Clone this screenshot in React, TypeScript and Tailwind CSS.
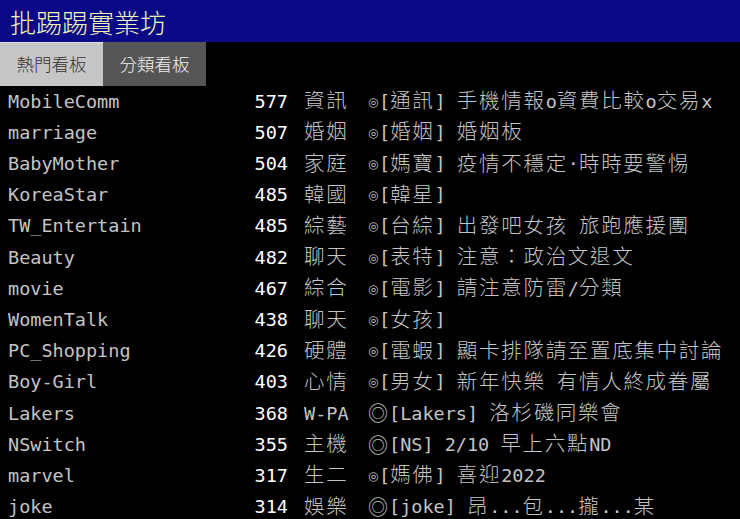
import React from 'react'

type Board = {
  name: string
  count: number
  cat: string
  desc: string
  big?: boolean
}

const boards: Board[] = [
  { name: 'MobileComm', count: 577, cat: '資訊', desc: '[通訊] 手機情報o資費比較o交易x' },
  { name: 'marriage', count: 507, cat: '婚姻', desc: '[婚姻] 婚姻板' },
  { name: 'BabyMother', count: 504, cat: '家庭', desc: '[媽寶] 疫情不穩定·時時要警惕' },
  { name: 'KoreaStar', count: 485, cat: '韓國', desc: '[韓星]' },
  { name: 'TW_Entertain', count: 485, cat: '綜藝', desc: '[台綜] 出發吧女孩 旅跑應援團' },
  { name: 'Beauty', count: 482, cat: '聊天', desc: '[表特] 注意：政治文退文' },
  { name: 'movie', count: 467, cat: '綜合', desc: '[電影] 請注意防雷/分類' },
  { name: 'WomenTalk', count: 438, cat: '聊天', desc: '[女孩]' },
  { name: 'PC_Shopping', count: 426, cat: '硬體', desc: '[電蝦] 顯卡排隊請至置底集中討論' },
  { name: 'Boy-Girl', count: 403, cat: '心情', desc: '[男女] 新年快樂 有情人終成眷屬' },
  { name: 'Lakers', count: 368, cat: 'W-PA', desc: '[Lakers] 洛杉磯同樂會', big: true },
  { name: 'NSwitch', count: 355, cat: '主機', desc: '[NS] 2/10 早上六點ND', big: true },
  { name: 'marvel', count: 317, cat: '生二', desc: '[媽佛] 喜迎2022' },
  { name: 'joke', count: 314, cat: '娛樂', desc: '[joke] 昂...包...攏...某', big: true },
]

const wide = /[\u2E80-\u9FFF\uF900-\uFAFF\uFF00-\uFF60]/

// split text into half-width and full-width runs so CJK takes two cells
function Term({ text }: { text: string }) {
  const runs: { w: boolean; s: string }[] = []
  for (const ch of text) {
    const w = wide.test(ch)
    const last = runs[runs.length - 1]
    if (last && last.w === w) last.s += ch
    else runs.push({ w, s: ch })
  }
  return (
    <>
      {runs.map((r, i) =>
        r.w ? (
          <span key={i} className="text-[20.5px] font-light tracking-[1.7px]">
            {r.s}
          </span>
        ) : (
          <span key={i} className="whitespace-pre">
            {r.s}
          </span>
        )
      )}
    </>
  )
}

function Row({ b }: { b: Board }) {
  return (
    <div className="flex h-[31.2px] items-center pl-2 text-[#c4c4c4]">
      <div className="flex w-[280px] justify-between">
        <span>{b.name}</span>
        <span className="text-white">{b.count}</span>
      </div>
      <div className="ml-[16px] w-[64px]">
        <Term text={b.cat} />
      </div>
      <div className="flex items-center whitespace-nowrap">
        {b.big ? (
          <span className="inline-block w-[21px] font-['Noto_Sans_CJK_TC',sans-serif] text-[20px] leading-none">◎</span>
        ) : (
          <span className="inline-block w-[11px] font-['DejaVu_Sans',sans-serif] text-[12px] leading-none">◎</span>
        )}
        <Term text={b.desc} />
      </div>
    </div>
  )
}

export default function App() {
  return (
    <div className="h-[519px] w-[740px] overflow-hidden bg-black font-['DejaVu_Sans_Mono','Noto_Sans_CJK_TC',monospace] text-[18.5px]">
      <div className="flex h-[42px] items-center bg-[#0a0a86] pl-[10px] font-['Noto_Sans_CJK_TC',sans-serif] text-[26px] font-light text-[#f4f4b8]">
        批踢踢實業坊
      </div>
      <div className="flex h-[44px] font-['Noto_Sans_CJK_TC',sans-serif] text-[17.5px] font-light">
        <div className="flex w-[103px] items-center justify-center border-t border-[#e0e0e0] bg-[#c6c6c6] text-[#333]">
          熱門看板
        </div>
        <div className="flex w-[103px] items-center justify-center bg-[#555555] text-[#f2f2f2]">
          分類看板
        </div>
      </div>
      <div>
        {boards.map((b) => (
          <Row key={b.name} b={b} />
        ))}
      </div>
    </div>
  )
}
